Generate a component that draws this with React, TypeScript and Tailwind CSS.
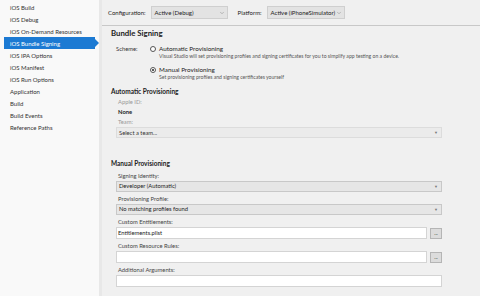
import { ChevronDown } from "lucide-react";

const navItems = [
  "iOS Build",
  "iOS Debug",
  "iOS On-Demand Resources",
  "iOS Bundle Signing",
  "iOS IPA Options",
  "iOS Manifest",
  "iOS Run Options",
  "Application",
  "Build",
  "Build Events",
  "Reference Paths",
];

const font = { fontFamily: 'Lato, "Open Sans", sans-serif' };

const Combo = ({ text, disabled }: { text: string; disabled?: boolean }) => (
  <div
    className={`flex h-[11px] items-center justify-between border pl-[2px] pr-[3px] text-[5.8px] ${
      disabled
        ? "border-[#dcdcdc] bg-[#ebebeb] text-[#333]"
        : "border-[#c8c8c8] bg-[#e6e6e6] text-[#222]"
    }`}
  >
    <span>{text}</span>
    <span className="text-[4px] text-[#777]">▼</span>
  </div>
);

const TextRow = ({ value, button }: { value?: string; button?: boolean }) => (
  <div className="flex h-[12px] items-center gap-[3px]">
    <div className="flex h-[12px] flex-1 items-center border border-[#d4d4d4] bg-white pl-[1px] text-[5.8px] text-[#222]">
      {value}
    </div>
    {button && (
      <div className="flex h-[11px] w-[12px] items-center justify-center border border-[#b5b5b5] bg-[#dcdcdc] text-[5px] leading-none text-[#333]">
        ...
      </div>
    )}
  </div>
);

const Label = ({ children }: { children: string }) => (
  <div className="flex h-[12px] items-end pb-[1px] pl-[2px] text-[5.8px] text-[#444]">
    {children}
  </div>
);

const App = () => {
  return (
    <div
      className="flex h-[296px] w-[480px] overflow-hidden bg-[#f0f0f0]"
      style={font}
    >
      <div className="flex w-[102px] flex-col border-r-[3px] border-[#e8e8e8] bg-[#f9f9f9] pt-[1px]">
        {navItems.map((item) => {
          const active = item === "iOS Bundle Signing";
          return (
            <div key={item} className="relative flex h-[12px] items-center">
              <div
                className={`ml-[4px] flex h-[12px] w-[93px] items-center whitespace-nowrap pl-[6px] text-[6px] ${
                  active ? "bg-[#1c7ad3] text-white" : "text-[#333]"
                }`}
              >
                {item}
              </div>
              {active && (
                <div className="h-0 w-0 border-y-[4px] border-l-[4px] border-y-transparent border-l-[#1c7ad3]" />
              )}
            </div>
          );
        })}
      </div>

      <div className="flex flex-1 flex-col">
        <div className="flex h-[26px] items-center border-b border-[#c8c8c8] pl-[6px] text-[6px] text-[#222]">
          <span className="mr-[5px] whitespace-nowrap">Configuration:</span>
          <div className="flex h-[13px] w-[77px] items-center justify-between whitespace-nowrap border border-[#cfcfcf] bg-[#e3e3e3] pl-[3px] pr-[2px]">
            <span>Active (Debug)</span>
            <ChevronDown size={6} strokeWidth={1.5} className="text-[#666]" />
          </div>
          <span className="ml-[10px] mr-[5px] whitespace-nowrap">Platform:</span>
          <div className="flex h-[13px] w-[78px] items-center justify-between whitespace-nowrap border border-[#cfcfcf] bg-[#e3e3e3] pl-[3px] pr-[2px]">
            <span>Active (iPhoneSimulator)</span>
            <ChevronDown size={6} strokeWidth={1.5} className="text-[#666]" />
          </div>
        </div>

        <div className="flex flex-col pl-[9px] pr-[38px]">
          <div className="pt-[2px] text-[7.8px] font-bold text-[#222]">Bundle Signing</div>

          <div className="mt-[4px] flex">
            <div className="w-[39px] pl-[5px] pt-[1px] text-[5.8px] text-[#333]">Scheme:</div>
            <div className="flex flex-col">
              <div className="flex items-start gap-[3px]">
                <div className="mt-[2px] h-[6px] w-[6px] rounded-full border border-[#555] bg-white" />
                <div className="flex flex-col">
                  <span className="text-[6.3px] leading-[9px] text-[#222]">Automatic Provisioning</span>
                  <span className="whitespace-nowrap text-[5.1px] leading-[7px] text-[#555]">
                    Visual Studio will set provisioning profiles and signing certificates for you to simplify app testing on a device.
                  </span>
                </div>
              </div>
              <div className="mt-[5px] flex items-start gap-[3px]">
                <div className="mt-[2px] flex h-[6px] w-[6px] items-center justify-center rounded-full border border-[#555] bg-white">
                  <div className="h-[2px] w-[2px] rounded-full bg-[#222]" />
                </div>
                <div className="flex flex-col">
                  <span className="text-[6.3px] leading-[9px] text-[#222]">Manual Provisioning</span>
                  <span className="text-[5.1px] leading-[7px] text-[#555]">
                    Set provisioning profiles and signing certificates yourself
                  </span>
                </div>
              </div>
            </div>
          </div>

          <div className="mt-[6px] text-[6.5px] font-bold text-[#222]">Automatic Provisioning</div>
          <div className="pl-[5px]">
            <div className="mt-[1px] pl-[2px] text-[5.8px] leading-[10px] text-[#999]">Apple ID:</div>
            <div className="pl-[2px] text-[5.8px] font-bold leading-[10px] text-[#222]">None</div>
            <div className="pl-[2px] text-[5.8px] leading-[10px] text-[#999]">Team:</div>
            <Combo text="Select a team..." disabled />
          </div>

          <div className="mt-[21px] text-[6.5px] font-bold text-[#222]">Manual Provisioning</div>
          <div className="pl-[5px]">
            <Label>Signing Identity:</Label>
            <Combo text="Developer (Automatic)" />
            <Label>Provisioning Profile:</Label>
            <Combo text="No matching profiles found" />
            <Label>Custom Entitlements:</Label>
            <TextRow value="Entitlements.plist" button />
            <Label>Custom Resource Rules:</Label>
            <TextRow button />
            <Label>Additional Arguments:</Label>
            <TextRow />
          </div>
        </div>
      </div>
    </div>
  );
};

export default App;
